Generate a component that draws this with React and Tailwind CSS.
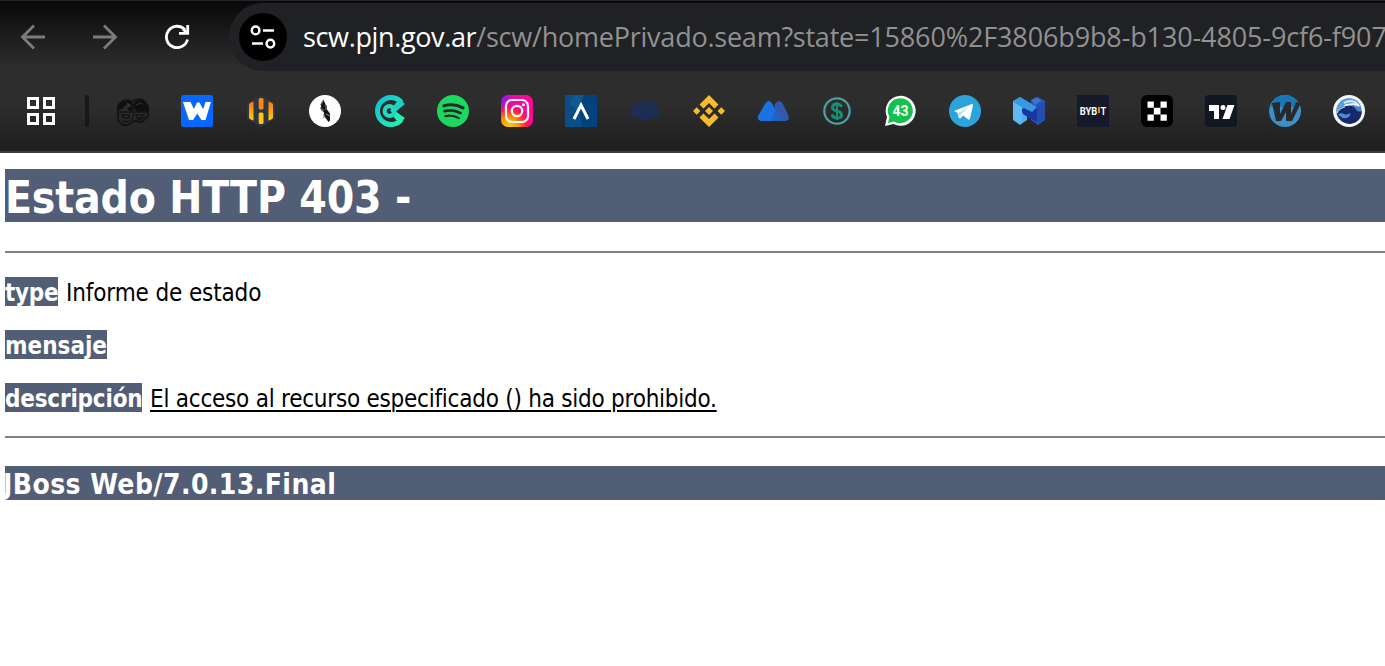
const Icon = ({ children, box = '0 0 32 32', className = 'size-8 shrink-0' }) => (
  <svg viewBox={box} fill="none" className={className}>{children}</svg>
)

function Toolbar() {
  return (
    <div className="flex h-[71px] items-start pt-[3px]">
      <div className="flex h-[68px] w-[229px] shrink-0 items-center pl-5">
        <Icon box="0 0 26 26" className="size-[26px] shrink-0">
          <path d="M25 13H3M14 1.5 2.5 13 14 24.5" stroke="#7c7c7c" strokeWidth="2.8" />
        </Icon>
        <Icon box="0 0 26 26" className="ml-[46px] size-[26px] shrink-0">
          <path d="M1 13h22M12 1.5 23.5 13 12 24.5" stroke="#7c7c7c" strokeWidth="2.8" />
        </Icon>
        <Icon box="0 0 26 26" className="ml-[46px] size-[26px] shrink-0">
          <path d="M21 5.700A10.700 10.700 0 1 0 23.500 15.500" stroke="#fff" strokeWidth="2.800" />
          <path d="M23.700 1v8.400H15" stroke="#fff" strokeWidth="2.800" />
          <path d="m19 5 4 4" stroke="#fff" strokeWidth="2.800" />
        </Icon>
      </div>
      <div className="flex h-[68px] flex-1 items-center overflow-hidden rounded-l-full bg-[#202124] pl-[10px]">
        <div className="flex size-12 shrink-0 items-center justify-center rounded-full bg-black">
          <Icon box="0 0 26 26" className="size-[26px]">
            <g stroke="#fff" strokeWidth="2.5">
              <circle cx="5.6" cy="6.4" r="3.8" />
              <path d="M13 6.4h11M2 19.6h11" />
              <circle cx="20.4" cy="19.6" r="3.8" />
            </g>
          </Icon>
        </div>
        <div className="ml-4 whitespace-nowrap font-['Open_Sans','Noto_Sans',sans-serif] text-[27px] leading-[36px] text-[#919191]">
          <span className="tracking-[-0.36px] text-white">scw.pjn.gov.ar</span>
          <span className="tracking-[-0.23px]">/scw/homePrivado.seam?state=</span>
          <span className="tracking-[-0.13px]">15860%2F3806b9b8-b130-4805-9cf6-f907</span>
        </div>
      </div>
    </div>
  )
}

function Bookmarks() {
  return (
    <div className="flex h-20 items-center pl-[27px]">
      <Icon box="0 0 28 28" className="size-7 shrink-0">
        <path d="M1.5 1.5h9v9h-9zM17.5 1.5h9v9h-9zM1.5 17.5h9v9h-9zM17.5 17.5h9v9h-9z" stroke="#fff" strokeWidth="3" />
      </Icon>
      <div className="ml-[30px] h-8 w-1 shrink-0 rounded-full bg-[#181818]" />
      <div className="ml-7 flex gap-8">
        <Icon>
          <path d="M1 17v-6q4-6 10-6l4 2q5-4 11-2l5 6v10l-6 6-8-1-6 4H6l-5-4z" stroke="#131313" strokeWidth="1.8" />
          <path d="M1 15q0-9 7-9l4-1 4 4q4-5 10-4 5 3 6 9v3H20l-3-4-3 4-4-3 4-4-3-2-6 6z" fill="#101010" />
          <path d="M2 17h28M5 20h7v3H6zM19 20h8l-2 3h-5zM15 8l2 10-2 7M6 26q4 2 8-1M20 25l6-2" stroke="#151515" strokeWidth="1.400" />
          <path d="M10 8l4 4M19 10q4-3 7-1" stroke="#333" strokeWidth="1" />
        </Icon>
        <Icon>
          <rect width="32" height="32" rx="2.5" fill="#0768ff" />
          <path d="M2 7h7.500l3.400 7L16 7.500h2.400l3.800 6.700L24.500 7H30l-5.500 18h-4l-4.200-6.500L12 25H8z" fill="#fff" />
        </Icon>
        <Icon>
          <defs><linearGradient id="hive" x1="0" y1="0" x2="0" y2="1"><stop stopColor="#f97316" /><stop offset="1" stopColor="#fed10a" /></linearGradient></defs>
          <path d="M16 1 29 8.5v15L16 31 3 23.500V8.500z" fill="#303641" stroke="#303641" strokeWidth="2" strokeLinejoin="round" />
          <path d="M4 9.500Q4 8 8.500 6.500V25.500Q4 24 4 22.500zM23.500 6.500Q28 8 28 9.500v13q0 1.500-4.500 3z" fill="url(#hive)" />
          <rect x="13.700" y="3" width="4.800" height="11.500" rx="1.500" fill="#fb861c" />
          <rect x="13.700" y="17.500" width="4.800" height="11.500" rx="1.500" fill="#fdc50d" />
        </Icon>
        <Icon>
          <circle cx="16" cy="16" r="16" fill="#fff" />
          <path d="m14.500 4.500 2 5 1.500 2v3l3 4v7l-1.500 1.500-2.500-3.500-2-3v-3l-3-2.500V9z" fill="#151515" />
          <path d="m11 13 4 3M17 19l4 2M14.500 5l-3 5M17 10v5M15 19v4" stroke="#777" strokeWidth="1.200" />
        </Icon>
        <Icon>
          <defs><linearGradient id="coin" x1="0" y1="0" x2="1" y2="1"><stop stopColor="#10bfd5" /><stop offset="1" stopColor="#27f2ae" /></linearGradient></defs>
          <path d="M28.500 7.500A13.500 13.500 0 1 0 28.500 24.500" stroke="url(#coin)" strokeWidth="5" />
          <path d="m26 4 6 5-12 10-3-3.500z" fill="#20cfc3" />
          <path d="m32 23-5.500 6L19 20l3-4z" fill="#29ebb5" />
          <circle cx="16.500" cy="16" r="4.800" stroke="#23d8bf" strokeWidth="4.200" />
        </Icon>
        <Icon>
          <circle cx="16" cy="16" r="16" fill="#1ed760" />
          <g stroke="#292b2a" strokeLinecap="round">
            <path d="M7 10.800q10-2.800 19 2" strokeWidth="3.200" />
            <path d="M7.600 16.100q8.500-2.300 16 2" strokeWidth="2.700" />
            <path d="M8.200 21.200q7.400-1.700 13.600 2" strokeWidth="2.100" />
          </g>
        </Icon>
        <Icon>
          <defs>
            <linearGradient id="ig" x1="0" y1="0" x2="1" y2="0"><stop stopColor="#8d15f5" /><stop offset=".4" stopColor="#ef08ab" /><stop offset="1" stopColor="#ff0698" /></linearGradient>
            <radialGradient id="ig2" cx=".25" cy="1" r=".8"><stop stopColor="#ffd000" /><stop offset=".35" stopColor="#ff9a00" /><stop offset=".7" stopColor="#ff174e" /><stop offset="1" stopColor="#ff069a" stopOpacity="0" /></radialGradient>
          </defs>
          <rect width="32" height="32" rx="7" fill="url(#ig)" />
          <rect width="32" height="32" rx="7" fill="url(#ig2)" />
          <rect x="5" y="5" width="22" height="22" rx="6" stroke="#fff" strokeWidth="2.200" />
          <circle cx="16" cy="16" r="5.200" stroke="#fff" strokeWidth="2.200" />
          <circle cx="22.400" cy="9.800" r="1.500" fill="#fff" />
        </Icon>
        <Icon>
          <path d="M0 0h32v32H0z" fill="#04427f" />
          <path d="M0 0h18l-4 12 3 20H0z" fill="#0a4d87" />
          <path d="M9 0h10l-6 16-9-7z" fill="#17619a" opacity=".6" />
          <path d="M9 24 16 10l7 14" stroke="#fff" strokeWidth="3" />
        </Icon>
        <Icon>
          <path d="M1 22q-.5-15.500 15-16 15.500.5 15 16h-9l-6 4-6-4z" fill="#1d2c50" />
          <path d="M4 19q5-8 12-8t12 8M9 20q3-5 7-5t7 5" stroke="#23325a" strokeWidth="1.200" />
          <circle cx="16" cy="21.500" r="3.500" fill="#182c5e" />
        </Icon>
        <Icon>
          <g fill="#f6bb2f">
            <path d="m16 0 9.500 9.500-4 4L16 8l-5.500 5.500-4-4zM16 32l9.500-9.500-4-4L16 24l-5.500-5.500-4 4z" />
            <path d="m3.700 12.300 3.700 3.700-3.700 3.700L0 16zM28.300 12.300 32 16l-3.700 3.700-3.700-3.700zM16 12l4 4-4 4-4-4z" />
          </g>
        </Icon>
        <Icon>
          <path d="M18 9q4-6 8 0l6 13q0 4-4 4H15z" fill="#3159b0" />
          <path d="M1 21 8 9q3.500-6 7.500 0L23 25l-4 1H4q-4-1-3-5z" fill="#1b72e3" />
          <path d="M18 15 23 26h-9z" fill="#1e62cb" />
        </Icon>
        <Icon>
          <circle cx="16" cy="16" r="12.700" stroke="#4f9da0" strokeWidth="2.300" />
          <path d="M20.500 12q-1-3-5-3-4 0-4 3.500 0 2.500 4.500 3.500t4.500 4q0 3-4.500 3-4 0-5-3.500" stroke="#188c74" strokeWidth="3" />
          <path d="M16 7v18" stroke="#188c74" strokeWidth="2" />
        </Icon>
        <Icon className="-ml-px mr-px size-8 shrink-0">
          <path d="m1 31 2-9A15 15 0 1 1 9.500 29z" fill="#fff" />
          <path d="m4 28 1.500-6A12.500 12.500 0 1 1 10 26.500z" fill="#12c24d" />
          <text x="16.500" y="20.500" textAnchor="middle" fill="#fff" fontFamily="Roboto, sans-serif" fontSize="14" fontWeight="700">43</text>
        </Icon>
        <Icon>
          <circle cx="16" cy="16" r="16" fill="#2ca3da" />
          <path d="m5 16 18-7q1.500-.5 1 1.500l-3 13q-.7 2-2.500.5l-4.500-3.500-2.500 3-1.800-.5-1-5z" fill="#fff" />
          <path d="M9.500 18 19 12.500l-7.500 7-.5 3.500z" fill="#b9d9e9" />
        </Icon>
        <Icon>
          <path d="m0 6 7-4 7 4v19l-7 5-7-5z" fill="#50b0ee" />
          <path d="m18 6 7-4 7 4v19l-7 5-7-5z" fill="#2556be" />
          <path d="m18 5 6-3 4 4-6 4z" fill="#3575da" />
          <path d="m8 2 16 10v15l-8-4-6-4-3-7z" fill="#1738a2" />
          <path d="m0 7 7-5 17 10-5 5-8-4-3 2z" fill="#3799df" />
          <path d="m0 7 9 5v15l-3 1-6-4z" fill="#61b8f4" />
          <path d="m24 11 8-4v17l-7 4z" fill="#254caf" />
        </Icon>
        <Icon>
          <path d="M0 0h32v32H0z" fill="#15192a" />
          <text x="2.800" y="20" fill="#fff" fontFamily="Roboto, sans-serif" fontSize="10" fontWeight="700" textLength="17.500" lengthAdjust="spacingAndGlyphs">BYB</text>
          <text x="23.400" y="20" fill="#fff" fontFamily="Roboto, sans-serif" fontSize="10" fontWeight="700" textLength="5.700" lengthAdjust="spacingAndGlyphs">T</text>
          <path d="M21 12h2v6h-2z" fill="#d48d20" />
        </Icon>
        <Icon>
          <rect width="32" height="32" rx="6" fill="#000" />
          <path d="M6.500 6.500h6.300v6.300H6.500zM19.500 6.500h6.300v6.300h-6.300zM12.800 12.800h6.700v6.700h-6.700zM6.500 19.500h6.300v6.300H6.500zM19.500 19.500h6.300v6.300h-6.300z" fill="#fff" />
        </Icon>
        <Icon>
          <rect width="32" height="32" rx="4" fill="#131722" />
          <path d="M4 10h10v14H9v-8H4zM22.500 10h7l-5 14h-7z" fill="#fff" />
          <circle cx="18" cy="12.500" r="2.500" fill="#fff" />
        </Icon>
        <Icon>
          <circle cx="16" cy="16" r="16" fill="#3c90c7" />
          <path d="M2 9Q7 0 16 0t14 9l-1 3H2z" fill="#1678b7" />
          <path d="m3 8 8-1v12l6-12h5v12l5-12 5 1-9 18h-6v-9l-5 9H7z" fill="#292a2b" />
        </Icon>
        <Icon>
          <circle cx="16" cy="16" r="16" fill="#f5f5f7" />
          <circle cx="16" cy="16" r="12.700" fill="#4188cb" />
          <path d="M3.500 13Q8 3 18 3.500q7 1 10.500 9L20 9l-8 1-8 8z" fill="#5fa2d9" />
          <path d="M11 8q5-3 11-1l4 4-6-2-7 1-9 8" stroke="#eef4fa" strokeWidth="1.800" />
          <path d="M4 19Q5 11 14 11q7-1 10 5 3 1 4.700 0 0 11-11.700 13Q7 28 4 19z" fill="#17276a" />
          <path d="M5 19q3 5 9 4 4-2 3-5-4 3-8 0z" fill="#438fd0" />
          <path d="M4 18q2-5 8-6" stroke="#b8d8ed" strokeWidth="1.200" />
        </Icon>
      </div>
    </div>
  )
}

const Tag = ({ children, className }) => (
  <b className={`inline-block h-[29px] shrink-0 whitespace-nowrap bg-[#525d76] leading-[33px] text-white ${className}`}>{children}</b>
)

export default function App() {
  return (
    <div className="h-[666px] w-full overflow-hidden bg-white">
      <header className="h-[153px] overflow-hidden border-b-2 border-[#403d3e] bg-[linear-gradient(to_bottom,#252525_0px,#252525_1px,#090909_1px,#0d0d0d_10px,#1c1c1c_35px,#2d2d2d_68px,#2d2d2d_105px,#1e1e1e_151px)]">
        <Toolbar />
        <Bookmarks />
      </header>
      <main className="pl-[5px] pt-4 font-['DejaVu_Sans_Condensed','DejaVu_Sans',sans-serif] text-[24px] text-black [font-stretch:condensed]">
        <h1 className="h-[53px] whitespace-nowrap bg-[#525d76] text-[44px] font-bold leading-[58px] tracking-[-0.18px] text-white">Estado HTTP 403 -</h1>
        <hr className="mt-[29px] border-t-2 border-[#808080]" />
        <p className="mt-6 flex h-[29px] leading-[33px]">
          <Tag className="w-[53px] tracking-[-0.3px]">type</Tag>
          <span className="ml-2 whitespace-nowrap tracking-[-0.13px]">Informe de estado</span>
        </p>
        <p className="mt-6 flex h-[29px]"><Tag className="w-[102px]">mensaje</Tag></p>
        <p className="mt-6 flex h-[29px] leading-[33px]">
          <Tag className="w-[137px] tracking-[-0.2px]">descripción</Tag>
          <u className="ml-2 whitespace-nowrap tracking-[-0.24px] decoration-2 underline-offset-[3px]">El acceso al recurso especificado () ha sido prohibido.</u>
        </p>
        <hr className="mt-6 border-t-2 border-[#808080]" />
        <h3 className="mt-7 h-[34px] whitespace-nowrap bg-[#525d76] text-[28px] font-bold leading-[38px] tracking-[0.42px] text-white">
          <span className="-ml-0.5">JBoss Web/7.0.13.Final</span>
        </h3>
      </main>
    </div>
  )
}
